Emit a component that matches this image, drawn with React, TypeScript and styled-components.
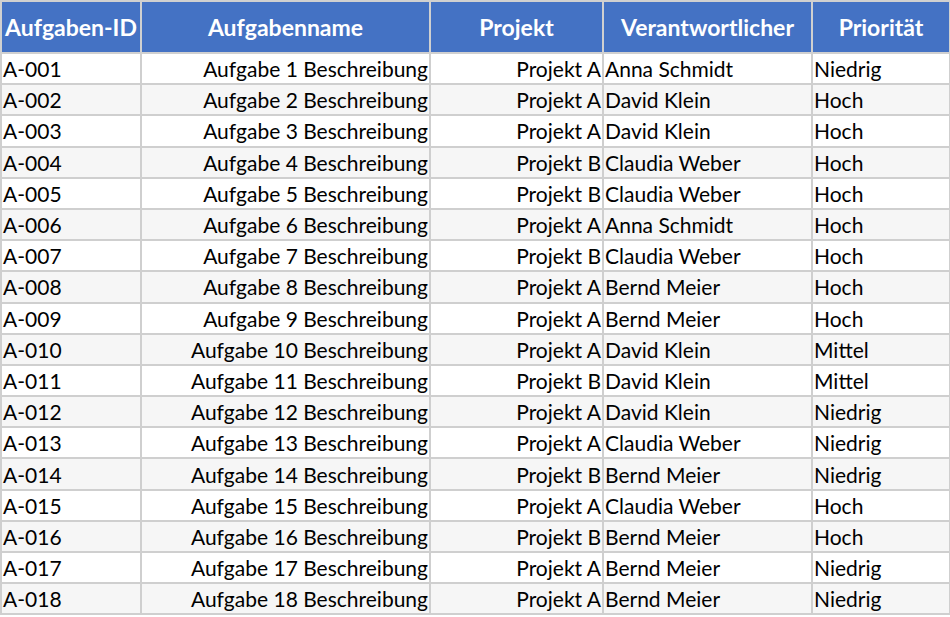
import React from 'react';
import styled, { createGlobalStyle } from 'styled-components';

const GlobalStyle = createGlobalStyle`
  html, body {
    margin: 0;
    padding: 0;
    background: #ffffff;
  }
`;

const Table = styled.table`
  border-collapse: collapse;
  table-layout: fixed;
  width: 949px;
  font-family: Lato, "Liberation Sans", sans-serif;
  font-size: 21px;
  color: #000000;
`;

const HeadCell = styled.th`
  background-color: #4472c4;
  color: #ffffff;
  font-size: 23px;
  font-weight: 700;
  height: 50px;
  padding: 0 1px;
  border: 2px solid #d0d0d0;
  text-align: center;
  white-space: nowrap;
`;

const Row = styled.tr<{ $striped: boolean }>`
  background-color: ${(props) => (props.$striped ? '#f6f6f6' : '#ffffff')};
`;

const Cell = styled.td<{ $align?: string }>`
  height: 29.2px;
  padding: 0 1px;
  border: 2px solid #cfcfcf;
  text-align: ${(props) => props.$align || 'left'};
  white-space: nowrap;
  overflow: hidden;
`;

type Task = {
  id: string;
  project: string;
  owner: string;
  priority: string;
};

const tasks: Task[] = [
  { id: 'A-001', project: 'Projekt A', owner: 'Anna Schmidt', priority: 'Niedrig' },
  { id: 'A-002', project: 'Projekt A', owner: 'David Klein', priority: 'Hoch' },
  { id: 'A-003', project: 'Projekt A', owner: 'David Klein', priority: 'Hoch' },
  { id: 'A-004', project: 'Projekt B', owner: 'Claudia Weber', priority: 'Hoch' },
  { id: 'A-005', project: 'Projekt B', owner: 'Claudia Weber', priority: 'Hoch' },
  { id: 'A-006', project: 'Projekt A', owner: 'Anna Schmidt', priority: 'Hoch' },
  { id: 'A-007', project: 'Projekt B', owner: 'Claudia Weber', priority: 'Hoch' },
  { id: 'A-008', project: 'Projekt A', owner: 'Bernd Meier', priority: 'Hoch' },
  { id: 'A-009', project: 'Projekt A', owner: 'Bernd Meier', priority: 'Hoch' },
  { id: 'A-010', project: 'Projekt A', owner: 'David Klein', priority: 'Mittel' },
  { id: 'A-011', project: 'Projekt B', owner: 'David Klein', priority: 'Mittel' },
  { id: 'A-012', project: 'Projekt A', owner: 'David Klein', priority: 'Niedrig' },
  { id: 'A-013', project: 'Projekt A', owner: 'Claudia Weber', priority: 'Niedrig' },
  { id: 'A-014', project: 'Projekt B', owner: 'Bernd Meier', priority: 'Niedrig' },
  { id: 'A-015', project: 'Projekt A', owner: 'Claudia Weber', priority: 'Hoch' },
  { id: 'A-016', project: 'Projekt B', owner: 'Bernd Meier', priority: 'Hoch' },
  { id: 'A-017', project: 'Projekt A', owner: 'Bernd Meier', priority: 'Niedrig' },
  { id: 'A-018', project: 'Projekt A', owner: 'Bernd Meier', priority: 'Niedrig' },
];

const App = () => {
  return (
    <>
      <GlobalStyle />
      <Table>
        <colgroup>
          <col style={{ width: 140 }} />
          <col style={{ width: 289 }} />
          <col style={{ width: 173 }} />
          <col style={{ width: 209 }} />
          <col style={{ width: 138 }} />
        </colgroup>
        <thead>
          <tr>
            <HeadCell>Aufgaben-ID</HeadCell>
            <HeadCell>Aufgabenname</HeadCell>
            <HeadCell>Projekt</HeadCell>
            <HeadCell>Verantwortlicher</HeadCell>
            <HeadCell>Priorität</HeadCell>
          </tr>
        </thead>
        <tbody>
          {tasks.map((task, i) => (
            <Row key={task.id} $striped={i % 2 === 1}>
              <Cell>{task.id}</Cell>
              <Cell $align="right">Aufgabe {i + 1} Beschreibung</Cell>
              <Cell $align="right">{task.project}</Cell>
              <Cell>{task.owner}</Cell>
              <Cell>{task.priority}</Cell>
            </Row>
          ))}
        </tbody>
      </Table>
    </>
  );
};

export default App;
